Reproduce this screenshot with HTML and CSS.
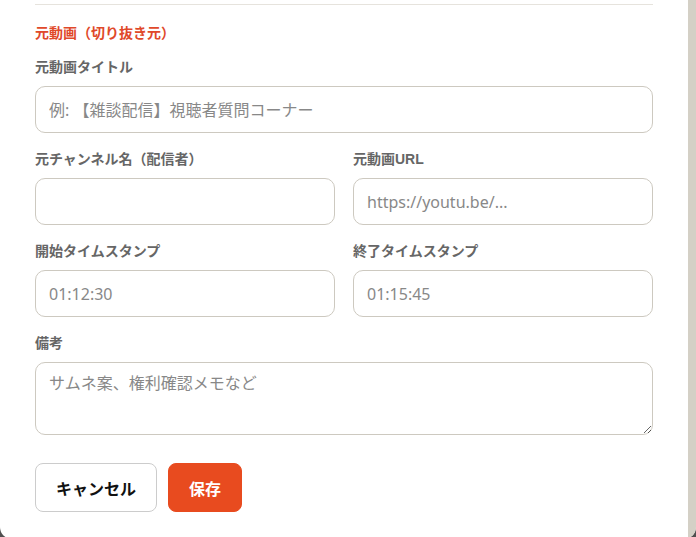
FILE: index.html
```html
<!DOCTYPE html>
<html lang="ja">
<head>
  <meta charset="UTF-8">
  <meta name="viewport" content="width=device-width, initial-scale=1.0">
  <title>切り抜き動画の登録</title>
  <link rel="stylesheet" href="styles.css">
</head>
<body>
  <div class="modal">
    <div class="modal-body">
      <hr class="divider">

      <h3 class="section-title">元動画（切り抜き元）</h3>

      <div class="field">
        <label class="field-label" for="src-title">元動画タイトル</label>
        <input class="field-input" id="src-title" type="text" placeholder="例: 【雑談配信】視聴者質問コーナー">
      </div>

      <div class="field-row">
        <div class="field">
          <label class="field-label" for="src-channel">元チャンネル名（配信者）</label>
          <input class="field-input" id="src-channel" type="text">
        </div>
        <div class="field">
          <label class="field-label" for="src-url">元動画URL</label>
          <input class="field-input" id="src-url" type="text" placeholder="https://youtu.be/...">
        </div>
      </div>

      <div class="field-row">
        <div class="field">
          <label class="field-label" for="start-ts">開始タイムスタンプ</label>
          <input class="field-input" id="start-ts" type="text" placeholder="01:12:30">
        </div>
        <div class="field">
          <label class="field-label" for="end-ts">終了タイムスタンプ</label>
          <input class="field-input" id="end-ts" type="text" placeholder="01:15:45">
        </div>
      </div>

      <div class="field">
        <label class="field-label" for="memo">備考</label>
        <textarea class="field-input field-textarea" id="memo" placeholder="サムネ案、権利確認メモなど"></textarea>
      </div>

      <div class="actions">
        <button class="btn btn-cancel" type="button">キャンセル</button>
        <button class="btn btn-save" type="button">保存</button>
      </div>
    </div>
    <div class="scroll-track"></div>
  </div>
</body>
</html>
```

FILE: styles.css
```css
/* Base */
body {
  margin: 0;
  background-color: #505050;
  font-family: "Liberation Sans", "Noto Sans CJK JP", sans-serif;
  color: #333;
  overflow: hidden;
}

/* Modal */
.modal {
  display: flex;
  height: 539px;
  background-color: #fff;
  border-radius: 0 0 12px 12px;
  overflow: hidden;
}

.modal-body {
  flex: 1;
  padding: 4px 35px 0 35px;
}

.scroll-track {
  width: 8px;
  background-color: #d4d0c6;
}

.divider {
  margin: 0;
  border: 0;
  border-top: 1px solid #e6e3dd;
}

.section-title {
  margin: 18px 0 14px;
  font-size: 14px;
  line-height: 20px;
  font-weight: 700;
  color: #e0492a;
}

/* Fields */
.field {
  display: flex;
  flex-direction: column;
  margin-bottom: 16px;
}

.field-row {
  display: grid;
  grid-template-columns: 1fr 1fr;
  gap: 18px;
}

.field-label {
  margin-bottom: 9px;
  font-size: 14px;
  line-height: 20px;
  font-weight: 700;
  color: #666;
}

.field-input {
  box-sizing: border-box;
  height: 47px;
  padding: 0 13px;
  border: 1px solid #cdc9c0;
  border-radius: 10px;
  background-color: #fff;
  font-family: "Noto Sans", "Noto Sans CJK JP", sans-serif;
  font-size: 16px;
  color: #555;
  outline: none;
}

.field-input::placeholder {
  color: #888;
}

.field-textarea {
  height: 73px;
  padding: 8px 13px;
  line-height: 24px;
  resize: vertical;
}

/* Buttons */
.actions {
  display: flex;
  gap: 11px;
  margin-top: 28px;
}

.btn {
  height: 49px;
  padding: 0 20px;
  border-radius: 8px;
  font-family: inherit;
  font-size: 16px;
  font-weight: 700;
  cursor: pointer;
}

.btn-cancel {
  border: 1px solid #ccc;
  background-color: #fff;
  color: #111;
}

.btn-save {
  border: 1px solid #e84b1f;
  background-color: #e84b1f;
  color: #fff;
}
```
